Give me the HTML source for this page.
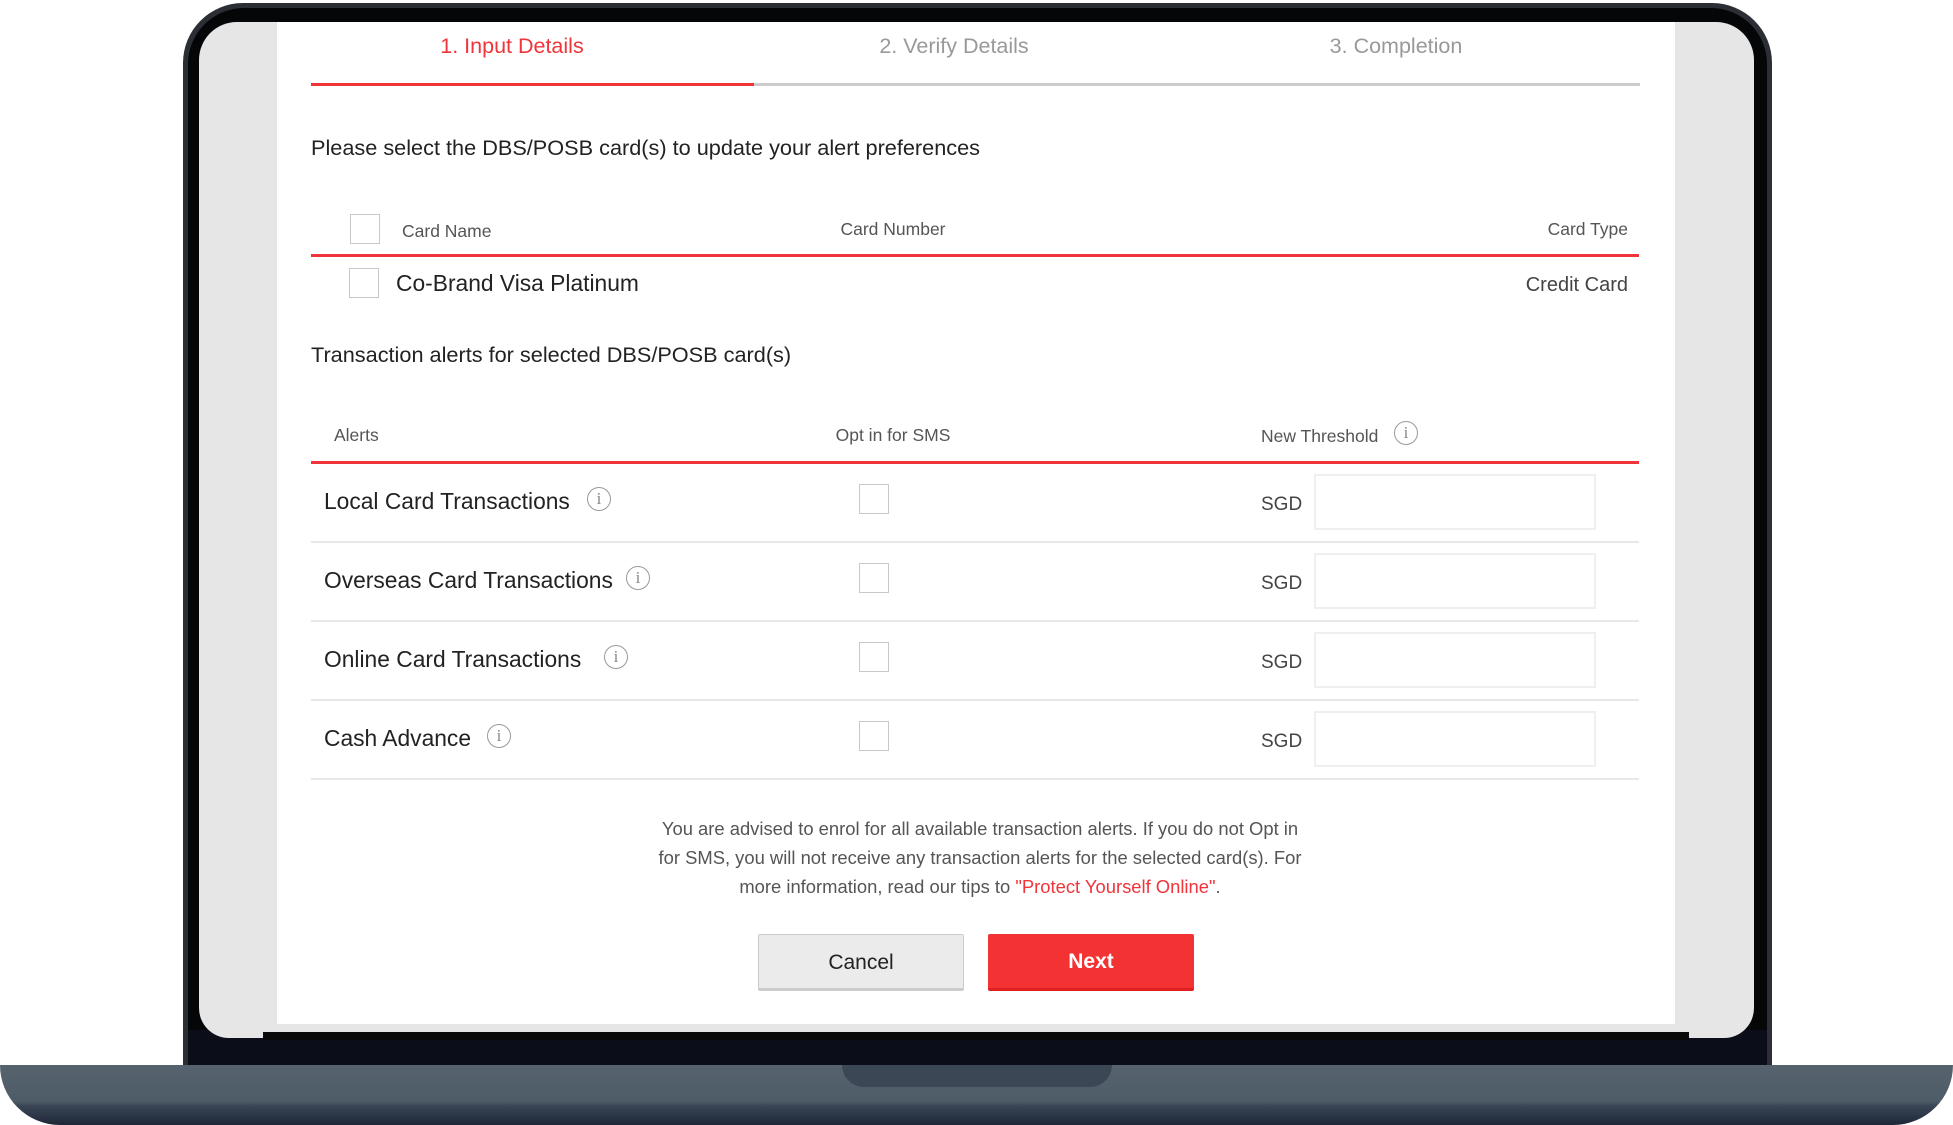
<!DOCTYPE html>
<html><head><meta charset="utf-8"><style>
*{margin:0;padding:0;box-sizing:border-box}
body{width:1953px;height:1125px;background:#fff;position:relative;overflow:hidden;font-family:"Liberation Sans",sans-serif;color:#222}
.a{position:absolute}
.t{position:absolute;white-space:nowrap}
.cb{position:absolute;width:30px;height:30px;border:1.5px solid #c8c8c8;background:#fff}
.info{position:absolute;width:24px;height:24px;border:1.5px solid #999;border-radius:50%;color:#888;font-family:"Liberation Serif",serif;font-size:17px;line-height:21px;text-align:center}
.sep{position:absolute;left:311px;width:1328px;height:2px;background:#e8e8e8}
.inp{position:absolute;left:1314px;width:282px;height:56px;border:2px solid #efefef;background:#fff}
.lbl{font-size:22.8px;color:#222}
.sgd{font-size:19px;color:#444}
.h{font-size:17.5px;color:#555}
</style></head><body>
<div class="a" style="left:183px;top:3px;width:1589px;height:1080px;border-radius:60px 60px 0 0;background:#2b2f35"></div>
<div class="a" style="left:188px;top:8px;width:1579px;height:1075px;border-radius:56px 56px 0 0;background:#050608"></div>
<div class="a" style="left:188px;top:1030px;width:1579px;height:40px;background:#0b0d18"></div>
<div class="a" style="left:199px;top:22px;width:1555px;height:1016px;border-radius:38px 38px 30px 30px;background:#e6e6e6;overflow:hidden">
  <div class="a" style="left:78px;top:0;width:1398px;height:1002px;background:#fff"></div>
</div>
<div class="a" style="left:263px;top:1032px;width:1426px;height:8px;background:#0a0a0a"></div>
<div class="a" style="left:0;top:1065px;width:1953px;height:60px;border-radius:0 0 60px 60px;background:linear-gradient(#56636e 0%,#4e5c68 60%,#3a4656 68%,#1e2737 100%)"></div>
<div class="a" style="left:842px;top:1065px;width:270px;height:22px;border-radius:0 0 22px 22px;background:#3b4754"></div>

<div class="t" style="left:312px;width:400px;top:34px;text-align:center;font-size:21.5px;color:#f0343a">1. Input Details</div>
<div class="t" style="left:754px;width:400px;top:34px;text-align:center;font-size:21.5px;color:#999">2. Verify Details</div>
<div class="t" style="left:1196px;width:400px;top:34px;text-align:center;font-size:21.5px;color:#999">3. Completion</div>
<div class="a" style="left:754px;top:83px;width:886px;height:3px;background:#ccc"></div>
<div class="a" style="left:311px;top:83px;width:443px;height:3px;background:#f0343a"></div>

<div class="t lbl" style="left:311px;top:135px;font-size:21.7px">Please select the DBS/POSB card(s) to update your alert preferences</div>

<div class="cb" style="left:350px;top:214px"></div>
<div class="t h" style="left:402px;top:221px">Card Name</div>
<div class="t h" style="left:793px;width:200px;text-align:center;top:219px">Card Number</div>
<div class="t h" style="right:325px;top:219px">Card Type</div>
<div class="a" style="left:311px;top:254px;width:1328px;height:3px;background:#f0343a"></div>
<div class="cb" style="left:349px;top:268px"></div>
<div class="t lbl" style="left:396px;top:270px">Co-Brand Visa Platinum</div>
<div class="t" style="right:325px;top:274px;font-size:20px;color:#444">Credit Card</div>

<div class="t lbl" style="left:311px;top:342px;font-size:21.7px">Transaction alerts for selected DBS/POSB card(s)</div>

<div class="t h" style="left:334px;top:425px">Alerts</div>
<div class="t h" style="left:793px;width:200px;text-align:center;top:425px">Opt in for SMS</div>
<div class="t h" style="left:1261px;top:426px">New Threshold</div>
<div class="info" style="left:1394px;top:421px">i</div>
<div class="a" style="left:311px;top:461px;width:1328px;height:3px;background:#f0343a"></div>

<div class="t lbl" style="left:324px;top:488px">Local Card Transactions</div>
<div class="info" style="left:587px;top:487px">i</div>
<div class="cb" style="left:859px;top:484px"></div>
<div class="t sgd" style="left:1261px;top:494px">SGD</div>
<div class="inp" style="top:474px"></div>
<div class="sep" style="top:541px"></div>

<div class="t lbl" style="left:324px;top:567px">Overseas Card Transactions</div>
<div class="info" style="left:626px;top:566px">i</div>
<div class="cb" style="left:859px;top:563px"></div>
<div class="t sgd" style="left:1261px;top:573px">SGD</div>
<div class="inp" style="top:553px"></div>
<div class="sep" style="top:620px"></div>

<div class="t lbl" style="left:324px;top:646px">Online Card Transactions</div>
<div class="info" style="left:604px;top:645px">i</div>
<div class="cb" style="left:859px;top:642px"></div>
<div class="t sgd" style="left:1261px;top:652px">SGD</div>
<div class="inp" style="top:632px"></div>
<div class="sep" style="top:699px"></div>

<div class="t lbl" style="left:324px;top:725px">Cash Advance</div>
<div class="info" style="left:487px;top:724px">i</div>
<div class="cb" style="left:859px;top:721px"></div>
<div class="t sgd" style="left:1261px;top:731px">SGD</div>
<div class="inp" style="top:711px"></div>
<div class="sep" style="top:778px"></div>

<div class="a" style="left:530px;top:814px;width:900px;text-align:center;font-size:18.4px;line-height:29px;color:#555">You are advised to enrol for all available transaction alerts. If you do not Opt in<br>for SMS, you will not receive any transaction alerts for the selected card(s). For<br>more information, read our tips to <span style="color:#f0343a">"Protect Yourself Online"</span>.</div>

<div class="a" style="left:758px;top:934px;width:206px;height:57px;background:#ebebeb;border:1px solid #ccc;border-bottom:3px solid #ccc;border-radius:2px;text-align:center;line-height:55px;font-size:21px;color:#222">Cancel</div>
<div class="a" style="left:988px;top:934px;width:206px;height:57px;background:#f33234;border-bottom:3px solid #e02020;border-radius:2px;text-align:center;line-height:56px;font-size:21px;color:#fff;font-weight:bold">Next</div>
</body></html>
